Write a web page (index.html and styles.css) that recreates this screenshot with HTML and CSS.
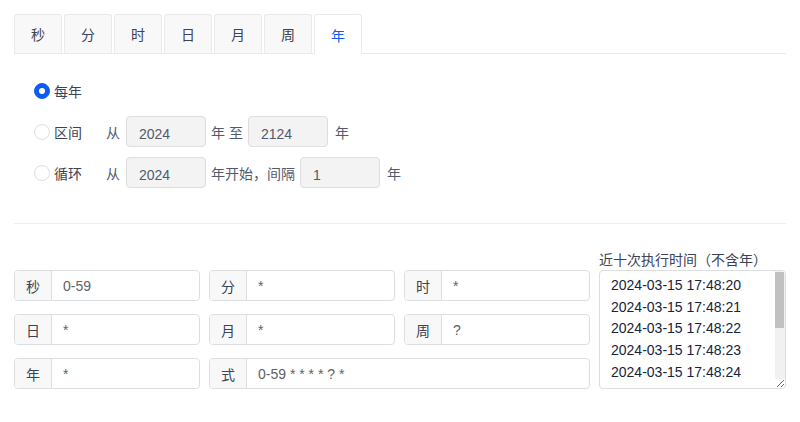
FILE: index.html
```html
<!DOCTYPE html>
<html>
<head>
  <title>Cron 表达式</title>
  <link rel="stylesheet" href="styles.css">
</head>
<body>
  <div class="cron">
    <div class="tabs">
      <div class="tab">秒</div>
      <div class="tab">分</div>
      <div class="tab">时</div>
      <div class="tab">日</div>
      <div class="tab">月</div>
      <div class="tab">周</div>
      <div class="tab active">年</div>
    </div>

    <div class="year-panel">
      <div class="row">
        <label class="radio-label"><span class="radio checked"></span>每年</label>
      </div>
      <div class="row">
        <label class="radio-label"><span class="radio"></span>区间</label>
        <span class="word">从</span>
        <input class="num-input" value="2024">
        <span class="word gap">年 至</span>
        <input class="num-input" value="2124">
        <span class="word gap-wide">年</span>
      </div>
      <div class="row">
        <label class="radio-label"><span class="radio"></span>循环</label>
        <span class="word">从</span>
        <input class="num-input" value="2024">
        <span class="word gap">年开始，间隔</span>
        <input class="num-input" value="1">
        <span class="word gap-wide">年</span>
      </div>
    </div>

    <div class="divider"></div>

    <div class="result">
      <div class="fields">
        <div class="field"><span class="field-label">秒</span><span class="field-value">0-59</span></div>
        <div class="field"><span class="field-label">分</span><span class="field-value">*</span></div>
        <div class="field"><span class="field-label">时</span><span class="field-value">*</span></div>
        <div class="field"><span class="field-label">日</span><span class="field-value">*</span></div>
        <div class="field"><span class="field-label">月</span><span class="field-value">*</span></div>
        <div class="field"><span class="field-label">周</span><span class="field-value">?</span></div>
        <div class="field"><span class="field-label">年</span><span class="field-value">*</span></div>
        <div class="field wide"><span class="field-label">式</span><span class="field-value">0-59 * * * * ? *</span></div>
      </div>
      <div class="next-times">
        <div class="next-title">近十次执行时间（不含年）</div>
        <div class="times-box">
          <textarea class="times" readonly>2024-03-15 17:48:20
2024-03-15 17:48:21
2024-03-15 17:48:22
2024-03-15 17:48:23
2024-03-15 17:48:24
2024-03-15 17:48:25
2024-03-15 17:48:26
2024-03-15 17:48:27
2024-03-15 17:48:28
2024-03-15 17:48:29</textarea>
          <div class="scroll-track"><div class="scroll-thumb"></div></div>
        </div>
      </div>
    </div>
  </div>
</body>
</html>
```

FILE: styles.css
```css
body {
  margin: 0;
  font-family: "Liberation Sans", "Noto Sans CJK SC", sans-serif;
  font-size: 14px;
  color: #515a6e;
  background-color: #fff;
}

.cron {
  padding: 14px 14px 0 14px;
}

.tabs {
  display: flex;
  border-bottom: 1px solid #e8eaec;
  height: 39px;
}

.tab {
  width: 48px;
  height: 39px;
  box-sizing: border-box;
  margin-right: 2px;
  border: 1px solid #e8eaec;
  border-bottom: none;
  border-radius: 3px 3px 0 0;
  background-color: #f8f8f9;
  display: flex;
  align-items: center;
  justify-content: center;
  color: #3d4353;
}

.tab.active {
  height: 40px;
  background-color: #fff;
  color: #0f5bf2;
  position: relative;
  z-index: 1;
}

.year-panel {
  padding: 21px 0 0 20px;
  display: flex;
  flex-direction: column;
  gap: 10px;
}

.row {
  display: flex;
  align-items: center;
  height: 31px;
}

.radio-label {
  width: 72px;
  flex-shrink: 0;
  display: flex;
  align-items: center;
  color: #3d4353;
}

.radio {
  width: 16px;
  height: 16px;
  box-sizing: border-box;
  border: 1px solid #dcdee2;
  border-radius: 50%;
  background-color: #fff;
  margin-right: 4px;
  position: relative;
}

.radio.checked {
  border-color: #0f5bf2;
  background-color: #0f5bf2;
}

.radio.checked::after {
  content: "";
  position: absolute;
  width: 6px;
  height: 6px;
  border-radius: 50%;
  background-color: #fff;
  left: 4px;
  top: 4px;
}

.word {
  margin-right: 6px;
}

.word.gap {
  margin-left: 5px;
  margin-right: 5px;
}

.word.gap-wide {
  margin-left: 7px;
}

.num-input {
  width: 80px;
  height: 31px;
  box-sizing: border-box;
  border: 1px solid #dcdee2;
  border-radius: 4px;
  background-color: #f3f3f3;
  padding: 4px 0 0 12px;
  font-family: inherit;
  font-size: 14px;
  color: #515a6e;
  outline: none;
}

.divider {
  border-top: 1px solid #eeeff1;
  margin-top: 35px;
}

.result {
  display: flex;
  align-items: flex-end;
  gap: 9px;
  margin-top: 26px;
}

.fields {
  display: grid;
  grid-template-columns: repeat(3, 186px);
  column-gap: 9px;
  row-gap: 13px;
}

.field {
  display: flex;
  height: 31px;
  box-sizing: border-box;
  border: 1px solid #dcdee2;
  border-radius: 4px;
  overflow: hidden;
}

.field.wide {
  grid-column: span 2;
}

.field-label {
  width: 36px;
  flex-shrink: 0;
  background-color: #f8f8f9;
  border-right: 1px solid #dcdee2;
  display: flex;
  align-items: center;
  justify-content: center;
  color: #3d4353;
}

.field-value {
  display: flex;
  align-items: center;
  padding-left: 11px;
  color: #606266;
}

.next-times {
  width: 187px;
}

.next-title {
  line-height: 20px;
  color: #3d4353;
}

.times-box {
  position: relative;
}

.times {
  display: block;
  width: 187px;
  height: 119px;
  box-sizing: border-box;
  margin: 0;
  border: 1px solid #dcdee2;
  border-radius: 4px;
  padding: 4px 12px 0 11px;
  font-family: inherit;
  font-size: 14px;
  line-height: 21.7px;
  color: #17233d;
  outline: none;
  overflow: hidden;
}

.scroll-track {
  position: absolute;
  right: 1px;
  top: 1px;
  bottom: 10px;
  width: 10px;
  background-color: #f1f1f1;
  border-top-right-radius: 3px;
}

.scroll-thumb {
  margin-top: 1px;
  height: 56px;
  width: 9px;
  background-color: #c1c1c1;
}
```
